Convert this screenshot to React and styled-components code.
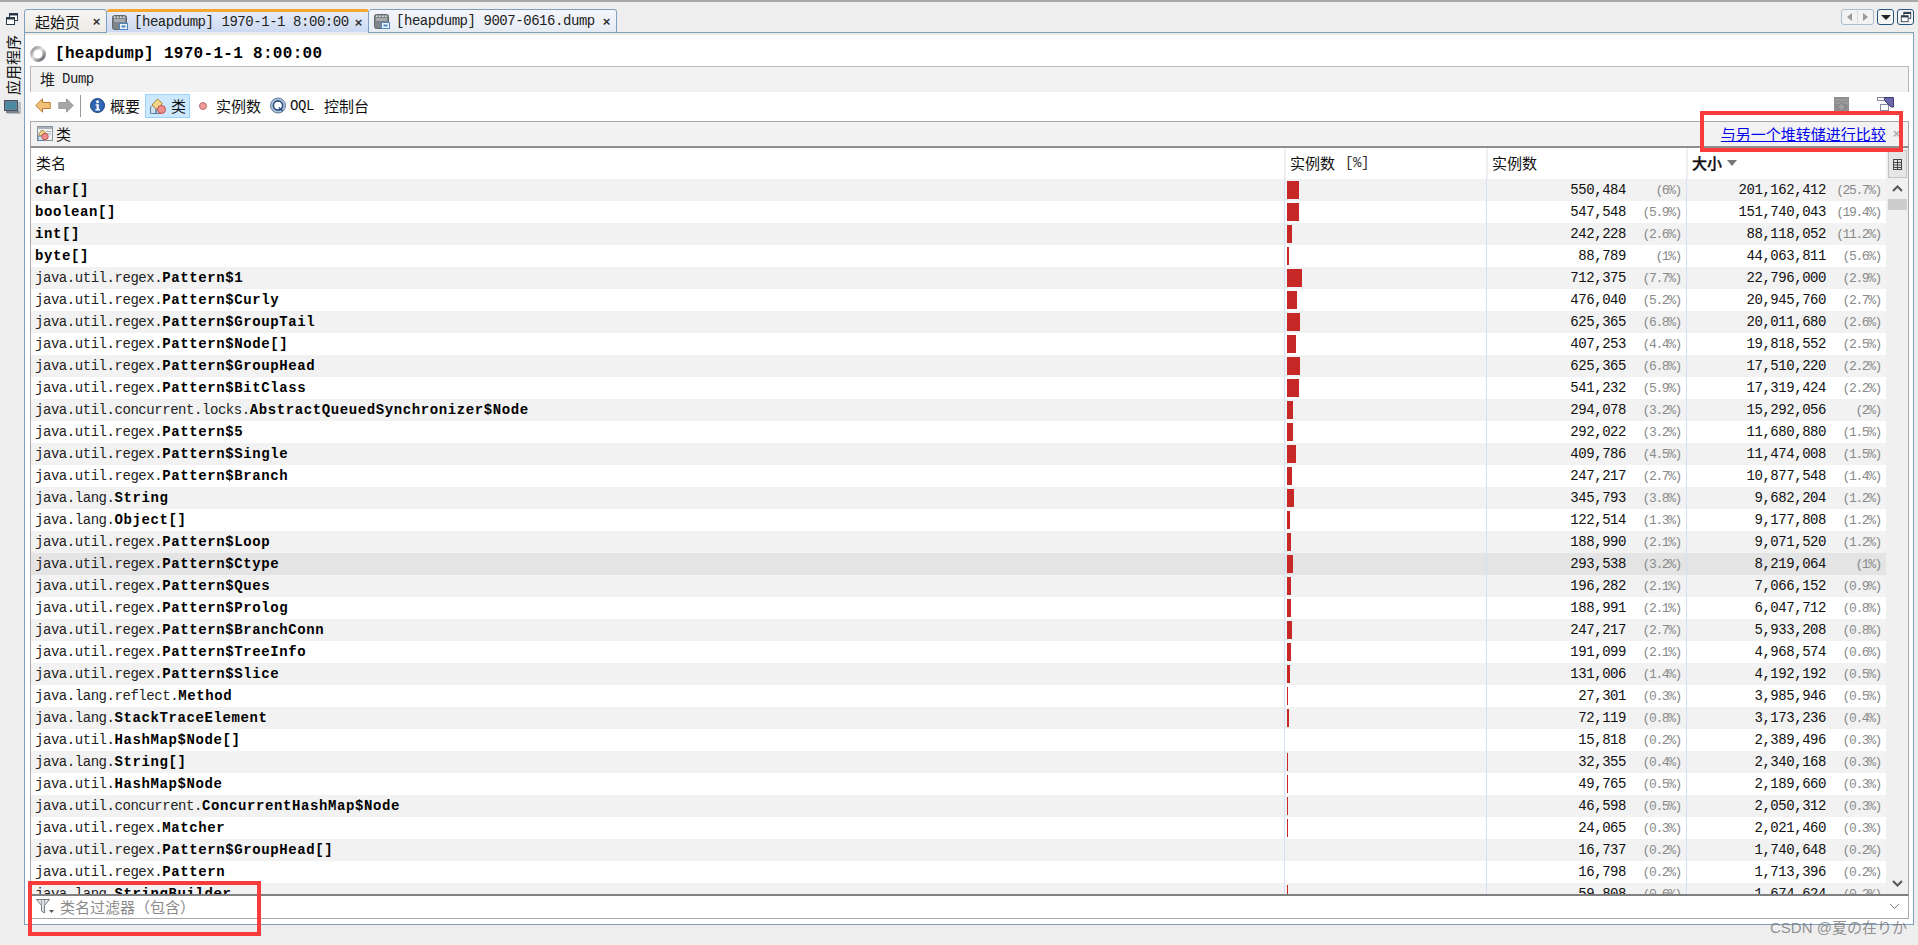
import React from "react"
import styled, { createGlobalStyle } from "styled-components"

const MONO = `"Liberation Mono", "Noto Sans CJK SC", monospace`
const CJK = `"Noto Sans CJK SC", "Liberation Sans", sans-serif`

const REGEX = "java.util.regex."

const rows = [
  ["", "char[]", "550,484", "6%", "201,162,412", "25.7%"],
  ["", "boolean[]", "547,548", "5.9%", "151,740,043", "19.4%"],
  ["", "int[]", "242,228", "2.6%", "88,118,052", "11.2%"],
  ["", "byte[]", "88,789", "1%", "44,063,811", "5.6%"],
  [REGEX, "Pattern$1", "712,375", "7.7%", "22,796,000", "2.9%"],
  [REGEX, "Pattern$Curly", "476,040", "5.2%", "20,945,760", "2.7%"],
  [REGEX, "Pattern$GroupTail", "625,365", "6.8%", "20,011,680", "2.6%"],
  [REGEX, "Pattern$Node[]", "407,253", "4.4%", "19,818,552", "2.5%"],
  [REGEX, "Pattern$GroupHead", "625,365", "6.8%", "17,510,220", "2.2%"],
  [REGEX, "Pattern$BitClass", "541,232", "5.9%", "17,319,424", "2.2%"],
  ["java.util.concurrent.locks.", "AbstractQueuedSynchronizer$Node", "294,078", "3.2%", "15,292,056", "2%"],
  [REGEX, "Pattern$5", "292,022", "3.2%", "11,680,880", "1.5%"],
  [REGEX, "Pattern$Single", "409,786", "4.5%", "11,474,008", "1.5%"],
  [REGEX, "Pattern$Branch", "247,217", "2.7%", "10,877,548", "1.4%"],
  ["java.lang.", "String", "345,793", "3.8%", "9,682,204", "1.2%"],
  ["java.lang.", "Object[]", "122,514", "1.3%", "9,177,808", "1.2%"],
  [REGEX, "Pattern$Loop", "188,990", "2.1%", "9,071,520", "1.2%"],
  [REGEX, "Pattern$Ctype", "293,538", "3.2%", "8,219,064", "1%"],
  [REGEX, "Pattern$Ques", "196,282", "2.1%", "7,066,152", "0.9%"],
  [REGEX, "Pattern$Prolog", "188,991", "2.1%", "6,047,712", "0.8%"],
  [REGEX, "Pattern$BranchConn", "247,217", "2.7%", "5,933,208", "0.8%"],
  [REGEX, "Pattern$TreeInfo", "191,099", "2.1%", "4,968,574", "0.6%"],
  [REGEX, "Pattern$Slice", "131,006", "1.4%", "4,192,192", "0.5%"],
  ["java.lang.reflect.", "Method", "27,301", "0.3%", "3,985,946", "0.5%"],
  ["java.lang.", "StackTraceElement", "72,119", "0.8%", "3,173,236", "0.4%"],
  ["java.util.", "HashMap$Node[]", "15,818", "0.2%", "2,389,496", "0.3%"],
  ["java.lang.", "String[]", "32,355", "0.4%", "2,340,168", "0.3%"],
  ["java.util.", "HashMap$Node", "49,765", "0.5%", "2,189,660", "0.3%"],
  ["java.util.concurrent.", "ConcurrentHashMap$Node", "46,598", "0.5%", "2,050,312", "0.3%"],
  [REGEX, "Matcher", "24,065", "0.3%", "2,021,460", "0.3%"],
  [REGEX, "Pattern$GroupHead[]", "16,737", "0.2%", "1,740,648", "0.2%"],
  [REGEX, "Pattern", "16,798", "0.2%", "1,713,396", "0.2%"],
  ["java.lang.", "StringBuilder", "59,808", "0.6%", "1,674,624", "0.2%"],
]

const SELECTED_ROW = 17

// icons
const DockIcon = ({ size = 14 }) => (
  <svg width={size} height={size} viewBox="0 0 14 14">
    <rect x="4.5" y="1.5" width="8" height="7" fill="#fff" stroke="#2b3a4a" />
    <rect x="4.5" y="1.5" width="8" height="2" fill="#2b3a4a" />
    <rect x="1.5" y="5.5" width="8" height="7" fill="#fff" stroke="#2b3a4a" />
    <rect x="1.5" y="5.5" width="8" height="2" fill="#2b3a4a" />
  </svg>
)

const MonitorIcon = () => (
  <svg width="17" height="14" viewBox="0 0 17 14">
    <rect x="3" y="2" width="14" height="12" fill="#b9bfc4" />
    <rect x="0.5" y="0.5" width="13" height="10" fill="#6d8596" stroke="#46535e" />
    <rect x="2" y="2" width="10" height="7" fill="#4b8aa0" />
    <rect x="2" y="11" width="13" height="2" fill="#7c858c" />
  </svg>
)

const HeapIcon = () => (
  <svg width="16" height="15" viewBox="0 0 16 15">
    <rect x="0.5" y="0.5" width="14" height="14" rx="2" fill="#7f8488" stroke="#62676b" />
    <path d="M2 2.2h1.6M5 2.2h1.6M8 2.2h1.6M11 2.2h1.6" stroke="#e4e4e4" strokeWidth="1.4" />
    <rect x="2" y="4" width="11" height="3" fill="#a8acb0" />
    <rect x="7.5" y="8.5" width="8" height="6" fill="#eef3fa" stroke="#4f86c0" />
    <rect x="9.5" y="10.5" width="4" height="2" fill="#4f86c0" />
  </svg>
)

const Spinner = () => (
  <svg width="16" height="16" viewBox="0 0 16 16">
    <defs>
      <linearGradient id="spin" x1="0" y1="0" x2="1" y2="1">
        <stop offset="0" stopColor="#8a8a92" />
        <stop offset="0.45" stopColor="#e2e2e2" />
        <stop offset="1" stopColor="#55555f" />
      </linearGradient>
    </defs>
    <circle cx="8" cy="8" r="6.2" fill="none" stroke="url(#spin)" strokeWidth="3.4" />
  </svg>
)

const NavArrow = ({ flip, fill, stroke }) => (
  <svg width="16" height="15" viewBox="0 0 16 15" style={flip ? { transform: "scaleX(-1)" } : undefined}>
    <path d="M0.8 7.5 L7.5 0.8 V4.5 H15.2 V10.5 H7.5 V14.2 Z" fill={fill} stroke={stroke} />
  </svg>
)

const InfoIcon = () => (
  <svg width="15" height="15" viewBox="0 0 15 15">
    <circle cx="7.5" cy="7.5" r="7" fill="#2f66b4" stroke="#1c417c" />
    <circle cx="7.5" cy="3.8" r="1.5" fill="#fff" />
    <path d="M5.6 6.2 H8.8 V11 H10 V12.4 H5.4 V11 H6.6 V7.6 H5.6 Z" fill="#fff" />
  </svg>
)

const ClassGlyph = () => (
  <svg width="16" height="16" viewBox="0 0 16 16">
    <path d="M0.5 9 L6 5 V15.5 H0.5 Z M6 8 H12 V15.5 H6 Z" fill="#cfe0ee" stroke="#5b7e9e" />
    <path d="M2 7 L7.5 1 L12.5 5.5 L7 11.5 Z" fill="#f4d58a" stroke="#a88432" />
    <circle cx="11.5" cy="11.5" r="4" fill="#ee8f8f" stroke="#c05050" />
  </svg>
)

const RedDot = () => (
  <svg width="8" height="8" viewBox="0 0 8 8">
    <circle cx="4" cy="4" r="3.5" fill="#f09a9a" stroke="#bd6b6b" />
  </svg>
)

const QueryIcon = () => (
  <svg width="16" height="17" viewBox="0 0 16 17">
    <circle cx="8" cy="8.5" r="7.5" fill="#b4c4d8" stroke="#5d7898" />
    <circle cx="8" cy="8.5" r="4.6" fill="#fff" stroke="#284e80" strokeWidth="1.6" />
    <path d="M9 10.5 L12.5 14" stroke="#284e80" strokeWidth="1.6" />
  </svg>
)

const ClassTableIcon = () => (
  <svg width="16" height="15" viewBox="0 0 16 15">
    <rect x="0.5" y="0.5" width="15" height="14" fill="#f0f0f0" stroke="#8a949e" />
    <rect x="1" y="1" width="14" height="2" fill="#a8b0b8" />
    <path d="M9 5.5h5M9 8h5M3 5h3" stroke="#a8b0b8" />
    <path d="M1.5 8 L5.5 4 L9 7.5 L5 11.5 Z" fill="#f4d58a" stroke="#a88432" />
    <rect x="1" y="10" width="6" height="4.5" fill="#cfe0ee" stroke="#5b7e9e" />
    <circle cx="8" cy="10.5" r="3.2" fill="#ee8f8f" stroke="#c05050" />
  </svg>
)

const GreyCompareIcon = () => (
  <svg width="16" height="14" viewBox="0 0 16 14">
    <rect width="15" height="14" fill="#8f8f8f" />
    <path d="M1 3h13M1 6h13" stroke="#a5a5a5" />
    <path d="M3 10 L7.5 6 L12 10 L7.5 14 Z" fill="#a0a0a0" stroke="#7a7a7a" />
  </svg>
)

const ExportIcon = () => (
  <svg width="17" height="14" viewBox="0 0 17 14">
    <rect x="3.5" y="7.5" width="8" height="6" fill="#fff" stroke="#8a8aa0" />
    <rect x="0.5" y="0.5" width="9" height="3" fill="#fff" stroke="#8a8aa0" />
    <path d="M7 0.5 H16.5 V10 H14 L8 4 Z" fill="#6a68a8" stroke="#3f3d78" />
  </svg>
)

const FilterIcon = () => (
  <svg width="18" height="15" viewBox="0 0 18 15">
    <path d="M0.5 0.5 H13.5 L8.5 6.5 V14 L5.5 12 V6.5 Z" fill="#dfe2e5" stroke="#777c82" />
    <path d="M5.5 1 V6 M8.5 1 V6" stroke="#a4a8ac" />
    <path d="M13 11 H18 L15.5 14 Z" fill="#555" />
  </svg>
)

const ColumnsIcon = () => (
  <svg width="9" height="11" viewBox="0 0 9 11">
    <rect x="0.5" y="0.5" width="8" height="10" fill="none" stroke="#444" />
    <path d="M0 3.5h9M0 6h9M0 8.5h9M4.5 0v11" stroke="#444" />
  </svg>
)

const Chevron = ({ down, color = "#555", width = 2 }) => (
  <svg width="11" height="7" viewBox="0 0 11 7">
    <path d={down ? "M1 1 L5.5 5.5 L10 1" : "M1 6 L5.5 1.5 L10 6"} fill="none" stroke={color} strokeWidth={width} />
  </svg>
)

const App = () => (
  <>
    <GlobalStyle />
    <Page>
      <Sidebar>
        <DockIcon />
        <SideLabel>应用程序</SideLabel>
        <MonitorIcon />
      </Sidebar>
      <Main>
        <TabStrip>
          <Tab $width={83} $kind="idle">
            <TabCjk>起始页</TabCjk>
            <TabClose>×</TabClose>
          </Tab>
          <Tab $width={262} $kind="active">
            <HeapIcon />
            <TabText>[heapdump] 1970-1-1 8:00:00</TabText>
            <TabClose>×</TabClose>
          </Tab>
          <Tab $width={248} $kind="other">
            <HeapIcon />
            <TabText>[heapdump] 9007-0616.dump</TabText>
            <TabClose>×</TabClose>
          </Tab>
          <TabControls>
            <PagerGroup>
              <PagerArrow $dir="left" />
              <PagerArrow $dir="right" />
            </PagerGroup>
            <CtrlButton><DropMark /></CtrlButton>
            <CtrlButton><DockIcon size={12} /></CtrlButton>
          </TabControls>
        </TabStrip>

        <Panel>
          <Title>
            <Spinner />
            <TitleText>[heapdump] 1970-1-1 8:00:00</TitleText>
          </Title>
          <HeapBar>
            <Cjk>堆</Cjk>
            <span>Dump</span>
          </HeapBar>
          <Toolbar>
            <NavGroup>
              <NavArrow fill="#f3c27a" stroke="#b9782a" />
              <NavArrow flip fill="#a6a6a6" stroke="#9a9a9a" />
            </NavGroup>
            <ToolDivider />
            <ToolItem $gap={5}><InfoIcon /><Cjk>概要</Cjk></ToolItem>
            <ToggleItem><ClassGlyph /><Cjk>类</Cjk></ToggleItem>
            <ToolItem $gap={9} $ml={9}><RedDot /><Cjk>实例数</Cjk></ToolItem>
            <ToolItem $gap={4} $ml={9}>
              <QueryIcon />
              <span>OQL</span>
              <ConsoleLabel>控制台</ConsoleLabel>
            </ToolItem>
            <ToolRight>
              <GreyCompareIcon />
              <ExportIcon />
            </ToolRight>
          </Toolbar>
          <ClassHead>
            <ClassTitle><ClassTableIcon /><Cjk>类</Cjk></ClassTitle>
            <CompareLink>与另一个堆转储进行比较</CompareLink>
            <HeadClose>×</HeadClose>
          </ClassHead>

          <TableFrame>
            <TableMain>
              <HeadRow>
                <HeadCell><Cjk>类名</Cjk></HeadCell>
                <HeadCell><Cjk>实例数</Cjk><PercentMark>[%]</PercentMark></HeadCell>
                <HeadCell><Cjk>实例数</Cjk></HeadCell>
                <HeadCell>
                  <SortedLabel>大小</SortedLabel>
                  <SortMark />
                </HeadCell>
              </HeadRow>
              <RowsClip>
                {rows.map(([pkg, cls, count, countPct, size, sizePct], i) => (
                  <Row key={i} $odd={i % 2 === 0} $selected={i === SELECTED_ROW}>
                    <NameCell>
                      {pkg}<b>{cls}</b>
                    </NameCell>
                    <BarCell>
                      <Bar style={{ width: Math.round(parseFloat(countPct) * 1.95) }} />
                    </BarCell>
                    <NumCell>
                      {count}
                      <Pct>({countPct})</Pct>
                    </NumCell>
                    <NumCell>
                      {size}
                      <Pct>({sizePct})</Pct>
                    </NumCell>
                  </Row>
                ))}
              </RowsClip>
            </TableMain>
            <ScrollColumn>
              <ColumnsButton><ColumnsIcon /></ColumnsButton>
              <ScrollArrow><Chevron color="#555" /></ScrollArrow>
              <ScrollThumb />
              <ScrollSpacer />
              <ScrollArrow><Chevron down color="#555" /></ScrollArrow>
            </ScrollColumn>
          </TableFrame>

          <FilterBar>
            <FilterIcon />
            <FilterHint>类名过滤器（包含）</FilterHint>
            <FilterDrop><Chevron down color="#777" width={1} /></FilterDrop>
          </FilterBar>
        </Panel>
      </Main>
      <NoteBoxLink />
      <NoteBoxFilter />
      <Watermark>CSDN @夏の在りか</Watermark>
    </Page>
  </>
)

export default App

const GlobalStyle = createGlobalStyle`
  html, body {
    margin: 0;
    padding: 0;
    background: #eeeeee;
  }
  * {
    box-sizing: border-box;
  }
`

const Page = styled.div`
  position: relative;
  display: flex;
  width: 1918px;
  height: 945px;
  overflow: hidden;
  background: #eeeeee;
  border-top: 2px solid #a9a9a9;
  font: 14px ${MONO};
  letter-spacing: -0.45px;
  color: #111;
`

const Cjk = styled.span`
  font: 15px/1 ${CJK};
  letter-spacing: 0;
`

const Sidebar = styled.div`
  width: 24px;
  flex: none;
  display: flex;
  flex-direction: column;
  align-items: center;
  padding-top: 10px;
`

const SideLabel = styled.div`
  writing-mode: vertical-rl;
  text-orientation: sideways;
  transform: rotate(180deg);
  font: 15px/15px ${CJK};
  letter-spacing: 0;
  margin: 9px 0 5px;
`

const Main = styled.div`
  flex: 1;
  display: flex;
  flex-direction: column;
  padding-right: 4px;
  min-width: 0;
`

const TabStrip = styled.div`
  display: flex;
  align-items: flex-end;
  height: 31px;
  flex: none;
  padding-top: 7px;
  position: relative;
  z-index: 1;
  margin-bottom: -1px;
`

const tabBackgrounds = {
  idle: "linear-gradient(#f6f5f2, #ecebe6)",
  active: "linear-gradient(#e6ecf8, #ccd9f1)",
  other: "linear-gradient(#f4f6fa, #e6ebf3)",
}

const Tab = styled.div`
  width: ${(p) => p.$width}px;
  height: 24px;
  display: flex;
  align-items: center;
  gap: 6px;
  padding: 0 6px 0 ${(p) => (p.$kind === "idle" ? 10 : 5)}px;
  border: 1px solid #7f9fc0;
  border-left-width: ${(p) => (p.$kind === "idle" ? 1 : 0)}px;
  border-bottom-color: ${(p) => (p.$kind === "active" ? "transparent" : "#7f9fc0")};
  border-radius: 3px 3px 0 0;
  border-top: ${(p) => (p.$kind === "active" ? "3px solid #f5a733" : "1px solid #7f9fc0")};
  background: ${(p) => tabBackgrounds[p.$kind]};
`

const TabText = styled.span`
  flex: 1;
  color: #222;
  white-space: nowrap;
`

const TabCjk = styled.span`
  flex: 1;
  font: 15px/1 ${CJK};
  letter-spacing: 0;
`

const TabClose = styled.span`
  font: bold 13px/1 "Liberation Sans", sans-serif;
  color: #333;
`

const TabControls = styled.div`
  margin-left: auto;
  align-self: flex-start;
  display: flex;
  gap: 3px;
`

const PagerGroup = styled.div`
  display: flex;
  width: 33px;
  height: 16px;
  border: 1px solid #a8bdd2;
  border-radius: 3px;
  background: #f2f2f2;
`

const PagerArrow = styled.div`
  flex: 1;
  position: relative;
  &:first-child {
    border-right: 1px solid #dcdcdc;
  }
  &:after {
    content: "";
    position: absolute;
    top: 3px;
    left: 5px;
    border: 4px solid transparent;
    border-width: 4px 5px;
    ${(p) => (p.$dir === "left"
      ? "border-right-color: #999; border-left-width: 0;"
      : "border-left-color: #999; border-right-width: 0;")}
  }
`

const CtrlButton = styled.div`
  width: 17px;
  height: 16px;
  display: flex;
  align-items: center;
  justify-content: center;
  border: 1px solid #24527e;
  border-radius: 3px;
  background: #f4f4f4;
`

const DropMark = styled.div`
  border: 5px solid transparent;
  border-top: 5px solid #222;
  border-bottom-width: 0;
`

const Panel = styled.div`
  height: 893px;
  flex: none;
  display: flex;
  flex-direction: column;
  padding: 0 4px 0 5px;
  background: #fff;
  border: 1px solid #7f9fc0;
  box-shadow: inset 0 2px 0 #ecedde;
`

const Title = styled.div`
  height: 33px;
  flex: none;
  display: flex;
  align-items: center;
  gap: 9px;
  padding-top: 9px;
`

const TitleText = styled.span`
  font: bold 16px/1 ${MONO};
  letter-spacing: 0.3px;
  color: #000;
`

const HeapBar = styled.div`
  height: 26px;
  flex: none;
  display: flex;
  align-items: center;
  gap: 7px;
  padding: 0 0 2px 9px;
  background: #f2f2f2;
  border: 1px solid #b8b8b8;
  border-bottom: none;
  color: #222;
`

const Toolbar = styled.div`
  height: 29px;
  flex: none;
  display: flex;
  align-items: center;
  padding: 0 0 2px 5px;
`

const NavGroup = styled.div`
  display: flex;
  gap: 7px;
`

const ToolDivider = styled.div`
  width: 1px;
  height: 22px;
  margin: 0 9px 0 6px;
  background: #9a9a9a;
`

const ToolItem = styled.div`
  display: flex;
  align-items: center;
  gap: ${(p) => p.$gap}px;
  margin-left: ${(p) => p.$ml || 0}px;
`

const ToggleItem = styled.div`
  width: 45px;
  height: 24px;
  margin-left: 5px;
  display: flex;
  align-items: center;
  gap: 5px;
  padding-left: 4px;
  background: #cce8ff;
  border: 1px solid #99d1ff;
`

const ConsoleLabel = styled(Cjk)`
  margin-left: 6px;
`

const ToolRight = styled.div`
  margin-left: auto;
  display: flex;
  gap: 27px;
  padding: 0 15px 3px 0;
`

const ClassHead = styled.div`
  height: 27px;
  flex: none;
  display: flex;
  align-items: center;
  background: #f2f2f2;
  border-top: 1px solid #a9a9a9;
  border-bottom: 2px solid #8f8f8f;
  border-left: 1px solid #a9a9a9;
  border-right: 1px solid #a9a9a9;
  padding: 0 8px 1px 6px;
`

const ClassTitle = styled.div`
  display: flex;
  align-items: center;
  gap: 3px;
  margin-right: auto;
`

const CompareLink = styled.a`
  font: 15px/1 ${CJK};
  letter-spacing: 0;
  color: #0000ee;
  text-decoration: underline;
`

const HeadClose = styled.span`
  margin-left: 7px;
  font: bold 13px/1 "Liberation Sans", sans-serif;
  color: #b0b0b0;
`

const TableFrame = styled.div`
  height: 746px;
  flex: none;
  display: flex;
  border-left: 1px solid #a9a9a9;
  border-right: 1px solid #a9a9a9;
`

const TableMain = styled.div`
  width: 1855px;
  flex: none;
  display: flex;
  flex-direction: column;
`

const COLUMNS = "1253px 202px 200px 200px"

const HeadRow = styled.div`
  height: 31px;
  flex: none;
  display: grid;
  grid-template-columns: ${COLUMNS};
`

const HeadCell = styled.div`
  display: flex;
  align-items: center;
  padding: 0 0 2px 5px;
  & + & {
    padding-left: 4px;
    border-left: 2px solid #eeeeee;
  }
`

const PercentMark = styled.span`
  margin-left: 10px;
  color: #333;
`

const SortedLabel = styled.span`
  font: 500 15px/1 ${CJK};
  letter-spacing: 0;
  -webkit-text-stroke: 0.3px #000;
`

const SortMark = styled.div`
  margin-left: 5px;
  border: 5px solid transparent;
  border-top: 6px solid #777;
  border-bottom-width: 0;
`

const RowsClip = styled.div`
  flex: 1;
  overflow: hidden;
`

const Row = styled.div`
  height: 22px;
  display: grid;
  grid-template-columns: ${COLUMNS};
  background: ${(p) => (p.$selected ? "#e4e4e4" : p.$odd ? "#f2f2f2" : "#fff")};
  line-height: 23px;
`

const NameCell = styled.div`
  padding-left: 4px;
  white-space: nowrap;
  color: #222;
  b {
    color: #000;
    letter-spacing: 0.6px;
  }
`

const BarCell = styled.div`
  padding: 2px 0 2px 2px;
  border-left: 1px solid #d5dff8;
`

const Bar = styled.div`
  height: 18px;
  background: #c62828;
`

const NumCell = styled.div`
  display: flex;
  justify-content: flex-end;
  padding-right: 5px;
  border-left: 1px solid #d5dff8;
  color: #111;
`

const Pct = styled.span`
  width: 55px;
  text-align: right;
  font-size: 13px;
  letter-spacing: -1.4px;
  color: #8a8a8a;
`

const ScrollColumn = styled.div`
  flex: 1;
  display: flex;
  flex-direction: column;
  align-items: center;
  background: #f0f0f0;
`

const ColumnsButton = styled.div`
  width: 19px;
  height: 28px;
  margin-top: 2px;
  flex: none;
  display: flex;
  align-items: center;
  justify-content: center;
  background: #e6e6e6;
  border: 1px solid #c4c4c4;
`

const ScrollArrow = styled.div`
  height: 21px;
  flex: none;
  display: flex;
  align-items: center;
`

const ScrollThumb = styled.div`
  width: 19px;
  height: 11px;
  flex: none;
  background: #cdcdcd;
`

const ScrollSpacer = styled.div`
  flex: 1;
`

const FilterBar = styled.div`
  height: 25px;
  flex: none;
  display: flex;
  align-items: center;
  padding: 0 8px 1px 5px;
  border: 1px solid #a9a9a9;
  border-top: 2px solid #808080;
`

const FilterHint = styled.span`
  margin-left: 6px;
  font: 15px/1 ${CJK};
  letter-spacing: 0;
  color: #8a8a8a;
`

const FilterDrop = styled.div`
  margin-left: auto;
  display: flex;
`

const NoteBoxLink = styled.div`
  position: absolute;
  left: 1700px;
  top: 109px;
  width: 203px;
  height: 41px;
  border: 4px solid #f83c3c;
`

const NoteBoxFilter = styled.div`
  position: absolute;
  left: 28px;
  top: 879px;
  width: 233px;
  height: 55px;
  border: 4px solid #f83c3c;
`

const Watermark = styled.div`
  position: absolute;
  left: 1770px;
  top: 916px;
  font: 15px/20px "Liberation Sans", ${CJK};
  letter-spacing: 0;
  color: rgba(110, 110, 110, 0.75);
  white-space: nowrap;
`
